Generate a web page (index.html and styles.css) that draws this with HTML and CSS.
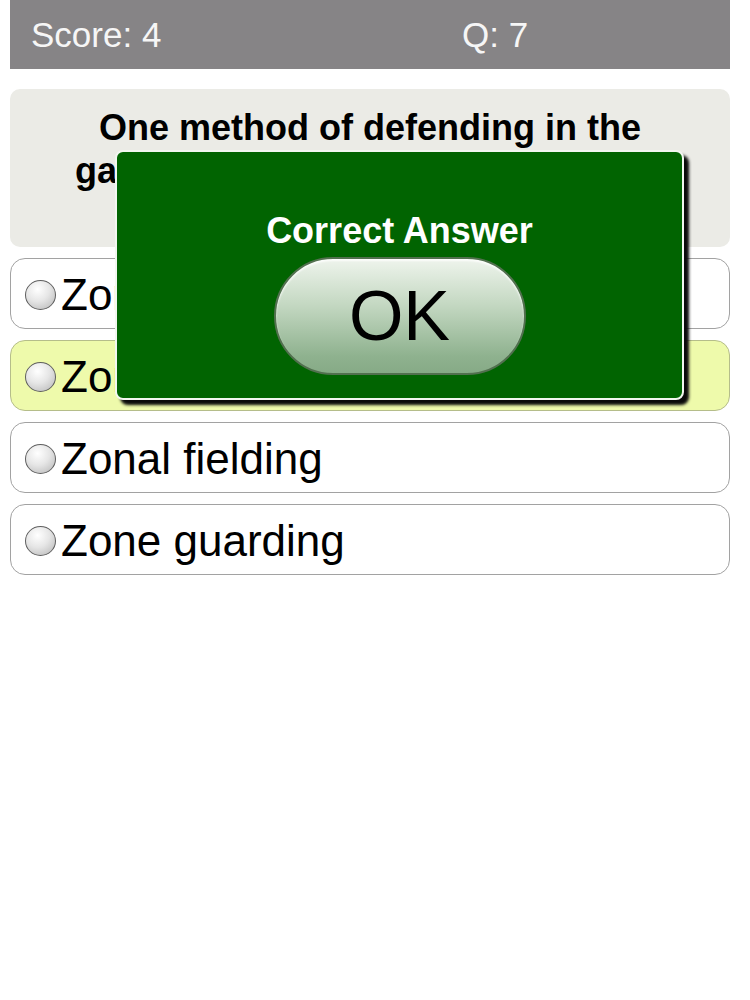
FILE: index.html
```html
<!DOCTYPE html>
<html>
<head>
<meta charset="utf-8">
<link rel="stylesheet" href="styles.css">
</head>
<body>
<div class="page">
  <header class="topbar">
    <span class="score">Score: 4</span>
    <span class="qnum">Q: 7</span>
  </header>
  <section class="question">
    <p>One method of defending in the<br>game of basketball is called what?</p>
  </section>
  <ul class="answers">
    <li class="answer"><span class="radio"></span><span class="label">Zone pressing</span></li>
    <li class="answer correct"><span class="radio"></span><span class="label">Zone defence</span></li>
    <li class="answer"><span class="radio"></span><span class="label">Zonal fielding</span></li>
    <li class="answer"><span class="radio"></span><span class="label">Zone guarding</span></li>
  </ul>
  <div class="modal">
    <div class="modal-title">Correct Answer</div>
    <button class="ok">OK</button>
  </div>
</div>
</body>
</html>
```

FILE: styles.css
```css
html, body {
  margin: 0;
  padding: 0;
  background: #ffffff;
}
.page {
  position: relative;
  padding: 0 20px 0 10px;
  font-family: "Liberation Sans", Arial, sans-serif;
}
.topbar {
  height: 69px;
  background: #868486;
  display: flex;
  align-items: center;
  color: #f6f6f6;
  font-size: 35px;
}
.score {
  margin-left: 21px;
  width: 431px;
}
.question {
  margin-top: 20px;
  height: 158px;
  background: #ebebe6;
  border-radius: 10px;
  box-sizing: border-box;
  padding: 17px 10px 0;
}
.question p {
  margin: 0;
  text-align: center;
  font-weight: bold;
  font-size: 36px;
  line-height: 43px;
  color: #000;
}
.answers {
  list-style: none;
  margin: 11px 0 0;
  padding: 0;
  display: flex;
  flex-direction: column;
  gap: 11px;
}
.answer {
  height: 71px;
  box-sizing: border-box;
  border: 1.5px solid #a2a2a2;
  border-radius: 15px;
  background: #ffffff;
  display: flex;
  align-items: center;
  padding-left: 14px;
  padding-top: 3px;
}
.answer.correct {
  background: #eefaab;
  border-color: #b5bd8a;
}
.radio {
  width: 31px;
  height: 30px;
  border-radius: 50%;
  box-sizing: border-box;
  border: 1.5px solid #5e5e5e;
  background: radial-gradient(circle at 40% 30%, #ffffff 0%, #e6e6e6 45%, #b4b4b4 100%);
  flex-shrink: 0;
  margin-right: 5px;
}
.label {
  font-size: 44px;
  color: #000;
  line-height: 1;
}
.modal {
  position: absolute;
  left: 115px;
  top: 150px;
  width: 569px;
  height: 250px;
  box-sizing: border-box;
  background: #016401;
  border: 2px solid #f2f7f0;
  border-radius: 8px;
  box-shadow: 5px 5px 3px #0a0a0a;
  display: flex;
  flex-direction: column;
  align-items: center;
  padding-top: 58px;
}
.modal-title {
  color: #ffffff;
  font-weight: bold;
  font-size: 36px;
  line-height: 41px;
}
.ok {
  margin-top: 6px;
  width: 252px;
  height: 118px;
  border-radius: 59px;
  border: 2px solid #52704f;
  background: linear-gradient(to bottom, #eef4ec 0%, #c4d8c2 40%, #8fb28f 85%, #86aa86 100%);
  box-shadow: inset 0 2px 2px rgba(255,255,255,0.8);
  font-family: "Liberation Sans", Arial, sans-serif;
  font-size: 70px;
  color: #000;
  padding: 0;
  line-height: 1;
}
```
